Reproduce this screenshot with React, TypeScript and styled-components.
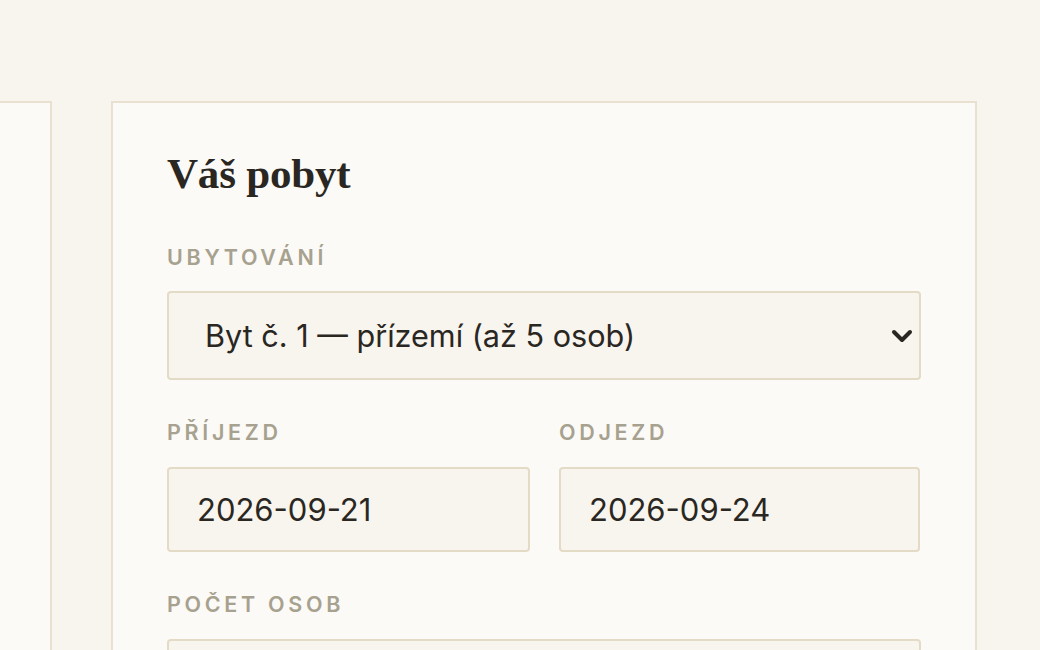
import React from 'react';
import styled, { createGlobalStyle } from 'styled-components';

const colors = {
  page: '#f8f4ee',
  card: '#fcfaf6',
  border: '#e9e1cf',
  field: '#f8f4ee',
  fieldBorder: '#e4dbc7',
  label: '#a7a18f',
  ink: '#2a2722',
};

const GlobalStyle = createGlobalStyle`
  html, body {
    margin: 0;
    padding: 0;
    background: ${colors.page};
    overflow: hidden;
  }
  * { box-sizing: border-box; }
`;

const Page = styled.div`
  display: grid;
  grid-template-columns: 52px 866px;
  column-gap: 59px;
  align-items: start;
  padding-top: 101px;
  height: 650px;
  font-family: Inter, "Noto Sans", sans-serif;
  color: ${colors.ink};
`;

const Card = styled.section<{ $cut?: boolean }>`
  background: ${colors.card};
  border: 2px solid ${colors.border};
  border-left-width: ${p => (p.$cut ? 0 : 2)}px;
  min-height: 700px;
  padding: ${p => (p.$cut ? '0' : '45px 54px 0')};
`;

const Title = styled.h2`
  margin: 0 0 45px;
  font-family: "Liberation Serif", "DejaVu Serif", serif;
  font-weight: 700;
  font-size: 43px;
  line-height: 1.2;
  letter-spacing: -0.2px;
  color: ${colors.ink};
`;

const Fields = styled.div`
  display: flex;
  flex-direction: column;
  gap: 40px;
`;

const Row = styled.div`
  display: grid;
  grid-template-columns: 363px 361px;
  column-gap: 29px;
`;

const Field = styled.label`
  display: flex;
  flex-direction: column;
  gap: 21px;
`;

const Label = styled.span`
  font-size: 21.5px;
  line-height: 1.2;
  font-weight: 600;
  letter-spacing: 3.7px;
  text-transform: uppercase;
  color: ${colors.label};
`;

const SelectWrap = styled.div`
  position: relative;
`;

const Select = styled.select`
  appearance: none;
  width: 100%;
  height: 89px;
  padding: 0 60px 0 36px;
  border: 2px solid ${colors.fieldBorder};
  border-radius: 4px;
  background: ${colors.field};
  font-family: inherit;
  font-size: 30.6px;
  color: ${colors.ink};
  outline: none;
`;

const Chevron = styled.svg`
  position: absolute;
  right: 8px;
  top: 50%;
  transform: translateY(-50%);
  width: 22px;
  height: 16px;
  pointer-events: none;
`;

const Input = styled.input`
  width: 100%;
  height: 85px;
  padding: 0 28px;
  border: 2px solid ${colors.fieldBorder};
  border-radius: 4px;
  background: ${colors.field};
  font-family: inherit;
  font-size: 31px;
  color: ${colors.ink};
  outline: none;
`;

const App = () => (
  <>
    <GlobalStyle />
    <Page>
      <Card $cut />
      <Card>
        <Title>Váš pobyt</Title>
        <Fields>
          <Field>
            <Label>Ubytování</Label>
            <SelectWrap>
              <Select defaultValue="1">
                <option value="1">Byt č. 1 — přízemí (až 5 osob)</option>
                <option value="2">Byt č. 2 — patro (až 4 osoby)</option>
              </Select>
              <Chevron viewBox="0 0 22 16">
                <path d="M3 4l8 8 8-8" fill="none" stroke={colors.ink} strokeWidth="4" strokeLinecap="round" strokeLinejoin="round" />
              </Chevron>
            </SelectWrap>
          </Field>
          <Row>
            <Field>
              <Label>Příjezd</Label>
              <Input type="text" defaultValue="2026-09-21" readOnly />
            </Field>
            <Field>
              <Label>Odjezd</Label>
              <Input type="text" defaultValue="2026-09-24" readOnly />
            </Field>
          </Row>
          <Field>
            <Label>Počet osob</Label>
            <Input type="text" defaultValue="2" readOnly />
          </Field>
        </Fields>
      </Card>
    </Page>
  </>
);

export default App;
